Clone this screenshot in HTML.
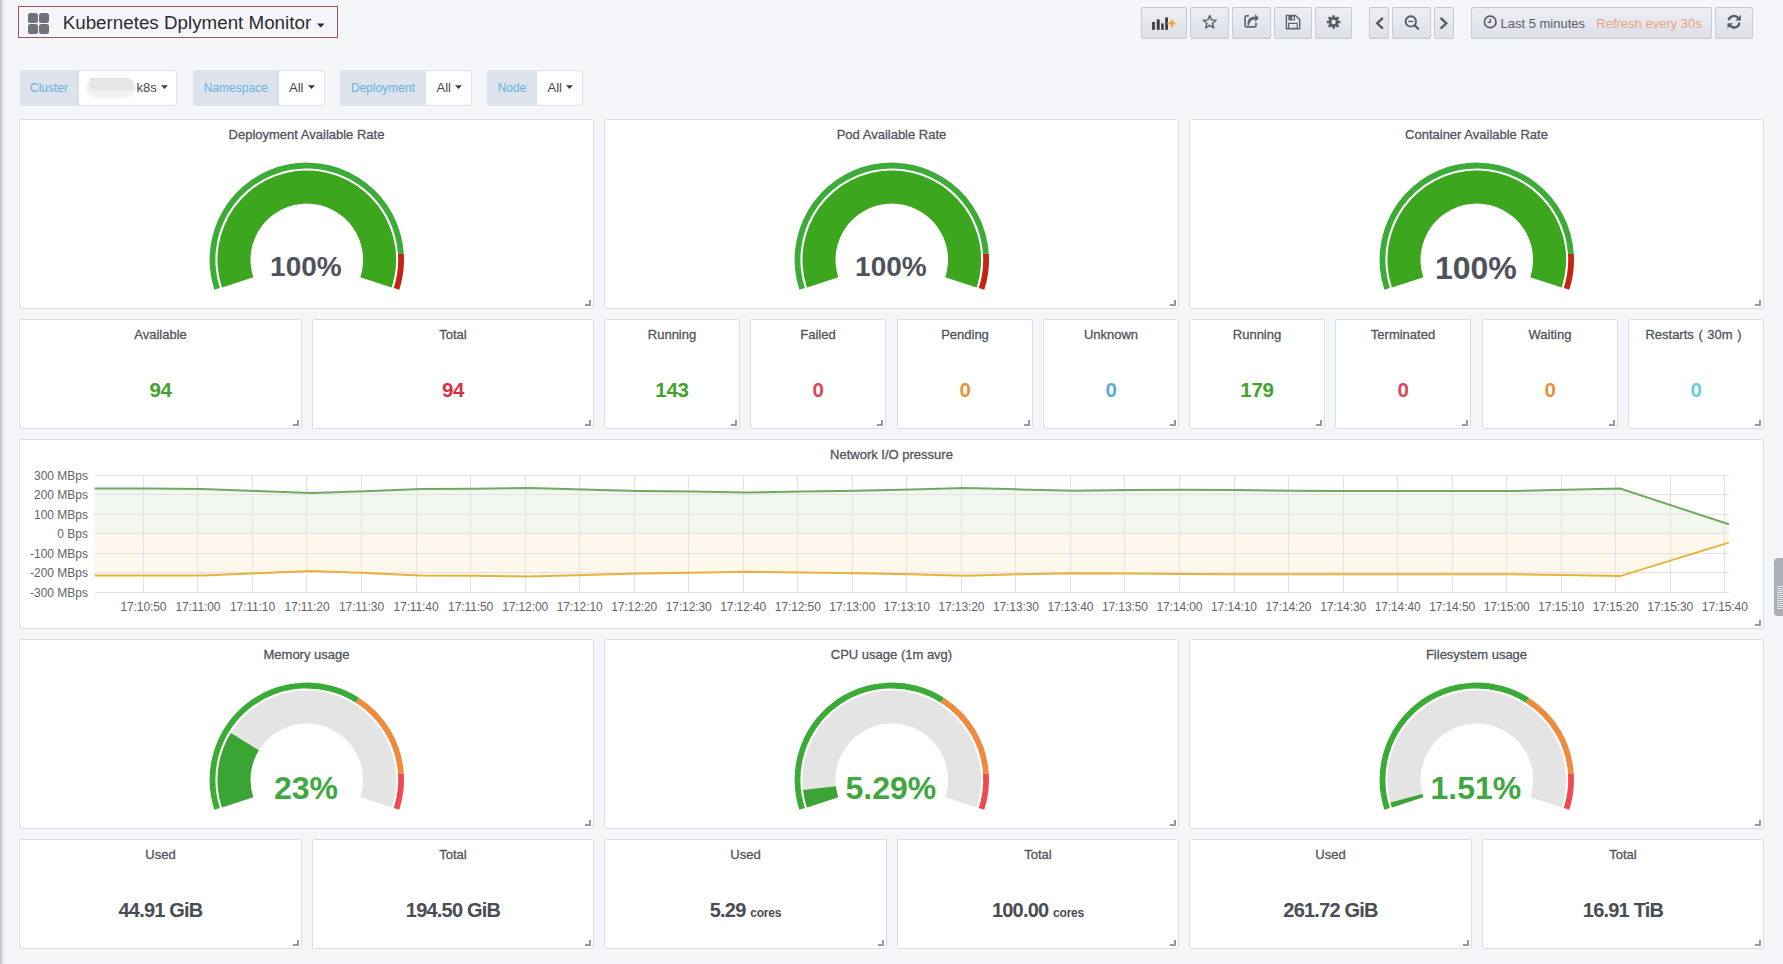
<!DOCTYPE html><html><head><meta charset="utf-8"><style>
html,body{margin:0;padding:0;}
body{width:1783px;height:964px;overflow:hidden;background:#f5f6f9;position:relative;font-family:"Liberation Sans", sans-serif;}
.t{position:absolute;line-height:1;white-space:nowrap;}
.p{position:absolute;box-sizing:border-box;background:#fff;border:1px solid #dcdee3;border-radius:2px;}
.rh{position:absolute;width:6px;height:6px;box-sizing:border-box;border-right:2px solid #97999d;border-bottom:2px solid #97999d;}
.lshadow{position:absolute;left:0;top:0;width:6px;height:964px;background:linear-gradient(90deg,#b9bcc2,#e9eaee 50%,#f5f6f9);}
.vl{position:absolute;top:70px;height:36px;box-sizing:border-box;background:#dde3ec;border-radius:3px 0 0 3px;}
.vv{position:absolute;top:70px;height:36px;box-sizing:border-box;background:#fff;border:1px solid #dfe3ea;border-left:none;border-radius:0 3px 3px 0;}
.b{position:absolute;top:7px;height:32px;box-sizing:border-box;background:linear-gradient(180deg,#eceef2,#dde1e8);border:1px solid #c6cad1;border-radius:2px;}
</style></head><body>
<div class="lshadow"></div>
<div style="position:absolute;left:18px;top:6px;width:320px;height:32px;box-sizing:border-box;border:1px solid #a4545e"></div>
<div style="position:absolute;left:28px;top:13px;width:10px;height:10px;border-radius:2.5px;background:#6f7279"></div>
<div style="position:absolute;left:39px;top:13px;width:10px;height:10px;border-radius:2.5px;background:#6f7279"></div>
<div style="position:absolute;left:28px;top:24px;width:10px;height:10px;border-radius:2.5px;background:#6f7279"></div>
<div style="position:absolute;left:39px;top:24px;width:10px;height:10px;border-radius:2.5px;background:#6f7279"></div>
<div class="t" style="left:62.70px;top:14.09px;font-size:18.8px;font-weight:normal;color:#2a2c32;">Kubernetes Dplyment Monitor</div>
<svg style="position:absolute;left:317px;top:23px" width="8" height="5"><path d="M0 0.5H7.5L3.75 4.5Z" fill="#2b2d33"/></svg>
<div class="vl" style="left:19.5px;width:59px"></div>
<div class="t" style="left:19.50px;top:81.64px;width:59.00px;font-size:12px;font-weight:normal;color:#69b1df;text-align:center;">Cluster</div>
<div class="vv" style="left:78.5px;width:98px"></div>
<div style="position:absolute;left:86px;top:77px;width:49px;height:21px;border-radius:10px;background:#f1f1f2;filter:blur(0.8px)"></div>
<div style="position:absolute;left:90px;top:78px;width:45px;height:12px;border-radius:1px 9px 0 0;background:#e6e6e7;filter:blur(0.5px)"></div>
<div class="t" style="left:136.50px;top:81.00px;font-size:13px;font-weight:normal;color:#46484e;">k8s</div>
<svg style="position:absolute;left:161.0px;top:85px" width="8" height="5"><path d="M0 0.3H7L3.5 4Z" fill="#3b3d43"/></svg>
<div class="vl" style="left:193px;width:85.5px"></div>
<div class="t" style="left:193.00px;top:81.64px;width:85.50px;font-size:12px;font-weight:normal;color:#69b1df;text-align:center;">Namespace</div>
<div class="vv" style="left:278.5px;width:46px"></div>
<div class="t" style="left:289.00px;top:81.00px;font-size:13px;font-weight:normal;color:#46484e;">All</div>
<svg style="position:absolute;left:307.5px;top:85px" width="8" height="5"><path d="M0 0.3H7L3.5 4Z" fill="#3b3d43"/></svg>
<div class="vl" style="left:340px;width:86px"></div>
<div class="t" style="left:340.00px;top:81.64px;width:86.00px;font-size:12px;font-weight:normal;color:#69b1df;text-align:center;">Deployment</div>
<div class="vv" style="left:426px;width:45.5px"></div>
<div class="t" style="left:436.50px;top:81.00px;font-size:13px;font-weight:normal;color:#46484e;">All</div>
<svg style="position:absolute;left:455px;top:85px" width="8" height="5"><path d="M0 0.3H7L3.5 4Z" fill="#3b3d43"/></svg>
<div class="vl" style="left:487px;width:50px"></div>
<div class="t" style="left:487.00px;top:81.64px;width:50.00px;font-size:12px;font-weight:normal;color:#69b1df;text-align:center;">Node</div>
<div class="vv" style="left:537px;width:45.5px"></div>
<div class="t" style="left:547.50px;top:81.00px;font-size:13px;font-weight:normal;color:#46484e;">All</div>
<svg style="position:absolute;left:566px;top:85px" width="8" height="5"><path d="M0 0.3H7L3.5 4Z" fill="#3b3d43"/></svg>
<div class="b" style="left:1141px;width:46px"></div>
<div class="b" style="left:1190px;width:39px"></div>
<div class="b" style="left:1232px;width:39px"></div>
<div class="b" style="left:1274px;width:38px"></div>
<div class="b" style="left:1315px;width:37px"></div>
<div class="b" style="left:1369px;width:20px"></div>
<div class="b" style="left:1392px;width:39px"></div>
<div class="b" style="left:1434px;width:20px"></div>
<div class="b" style="left:1471px;width:241px"></div>
<div class="b" style="left:1715px;width:38px"></div>
<svg style="position:absolute;left:1141px;top:7px" width="46" height="32">
<rect x="11.1" y="15" width="2.8" height="7.8" fill="#3a3d43"/><rect x="15.7" y="12.4" width="3" height="10.4" fill="#3a3d43"/>
<rect x="20.2" y="16.4" width="2.5" height="6.4" fill="#3a3d43"/><rect x="24.2" y="10.4" width="2.8" height="12.4" fill="#3a3d43"/>
<path d="M27 15.1h2.5v-2.6h2.6v2.6h2.5v2.6h-2.5v2.6h-2.6v-2.6h-2.5z" fill="#f2a12b" stroke="#f6dcb4" stroke-width="0.7"/></svg>
<svg style="position:absolute;left:1190px;top:7px" width="39" height="32"><polygon points="19.70,8.50 21.46,12.87 26.17,13.20 22.55,16.23 23.70,20.80 19.70,18.30 15.70,20.80 16.85,16.23 13.23,13.20 17.94,12.87" fill="none" stroke="#5a5d65" stroke-width="1.4" stroke-linejoin="round"/></svg>
<svg style="position:absolute;left:1232px;top:7px" width="39" height="32">
<path d="M16.8 8.9H14.6Q13.1 8.9 13.1 10.4V18.4Q13.1 19.9 14.6 19.9H22.5Q24 19.9 24 18.4V15.8" fill="none" stroke="#64676e" stroke-width="1.7"/>
<path d="M23.1 9.5V7.1L26.9 11L23.1 14.9V12.5C20 12.5 17.9 13.7 17.1 18.6L15.6 18.6C15.1 13.3 16.9 9.5 23.1 9.5Z" fill="#64676e"/></svg>
<svg style="position:absolute;left:1274px;top:7px" width="38" height="32">
<path d="M12.4 8.4H21.5L25.7 12.5V21.7H12.4Z" fill="none" stroke="#606369" stroke-width="1.4" stroke-linejoin="round"/>
<rect x="14.4" y="8.6" width="6.6" height="4.8" fill="#606369"/><rect x="18" y="9.6" width="1.9" height="2.7" fill="#dfe3e9"/>
<rect x="14.6" y="16.4" width="8.6" height="5" fill="none" stroke="#606369" stroke-width="1.2"/></svg>
<svg style="position:absolute;left:1315px;top:7px" width="37" height="32"><circle cx="18.6" cy="15" r="4.9" fill="#5a5d65"/><rect x="17.3" y="8.2" width="2.6" height="3" rx="0.4" fill="#5a5d65" transform="rotate(0 18.6 15)"/><rect x="17.3" y="8.2" width="2.6" height="3" rx="0.4" fill="#5a5d65" transform="rotate(45 18.6 15)"/><rect x="17.3" y="8.2" width="2.6" height="3" rx="0.4" fill="#5a5d65" transform="rotate(90 18.6 15)"/><rect x="17.3" y="8.2" width="2.6" height="3" rx="0.4" fill="#5a5d65" transform="rotate(135 18.6 15)"/><rect x="17.3" y="8.2" width="2.6" height="3" rx="0.4" fill="#5a5d65" transform="rotate(180 18.6 15)"/><rect x="17.3" y="8.2" width="2.6" height="3" rx="0.4" fill="#5a5d65" transform="rotate(225 18.6 15)"/><rect x="17.3" y="8.2" width="2.6" height="3" rx="0.4" fill="#5a5d65" transform="rotate(270 18.6 15)"/><rect x="17.3" y="8.2" width="2.6" height="3" rx="0.4" fill="#5a5d65" transform="rotate(315 18.6 15)"/><circle cx="18.6" cy="15" r="2.2" fill="#e6e9ee"/></svg>
<svg style="position:absolute;left:1369px;top:7px" width="20" height="32"><path d="M13.9 10.9L8.2 16.3L13.9 21.7" fill="none" stroke="#5a5d65" stroke-width="2.4"/></svg>
<svg style="position:absolute;left:1434px;top:7px" width="20" height="32"><path d="M6.6 10.9L12.3 16.3L6.6 21.7" fill="none" stroke="#5a5d65" stroke-width="2.4"/></svg>
<svg style="position:absolute;left:1392px;top:7px" width="39" height="32"><circle cx="18.8" cy="14.4" r="5.2" fill="none" stroke="#5a5d65" stroke-width="1.9"/><path d="M16.2 14.4h5.2" stroke="#5a5d65" stroke-width="1.3"/><path d="M22.6 18.2l3.6 3.6" stroke="#5a5d65" stroke-width="2.2" stroke-linecap="round"/></svg>
<svg style="position:absolute;left:1471px;top:7px" width="30" height="32"><circle cx="19.2" cy="14.9" r="5.8" fill="none" stroke="#5a5d65" stroke-width="1.7"/><path d="M19.3 11.8v3.6h-2.6" fill="none" stroke="#5a5d65" stroke-width="1.3"/></svg>
<div class="t" style="left:1500.50px;top:16.70px;font-size:13px;font-weight:normal;color:#5c5f67;">Last 5 minutes</div>
<div class="t" style="left:1596.30px;top:16.70px;font-size:13px;font-weight:normal;color:#eea27e;">Refresh every 30s</div>
<svg style="position:absolute;left:1715px;top:7px" width="38" height="32">
<path d="M13.6 13.3A5.3 5.3 0 0 1 23.2 11.2" fill="none" stroke="#5a5d65" stroke-width="2.3"/>
<path d="M25.9 7.8V13.4H20.3Z" fill="#5a5d65"/>
<path d="M24.4 15.6A5.3 5.3 0 0 1 14.6 17.9" fill="none" stroke="#5a5d65" stroke-width="2.3"/>
<path d="M12.5 21.6V16.2H17.9Z" fill="#5a5d65"/></svg>
<div class="p" style="left:19px;top:119px;width:575px;height:190px"></div>
<div class="rh" style="left:585px;top:300px"></div>
<div class="p" style="left:604px;top:119px;width:575px;height:190px"></div>
<div class="rh" style="left:1170px;top:300px"></div>
<div class="p" style="left:1189px;top:119px;width:575px;height:190px"></div>
<div class="rh" style="left:1755px;top:300px"></div>
<div class="p" style="left:19px;top:319px;width:283px;height:110px"></div>
<div class="rh" style="left:293px;top:420px"></div>
<div class="t" style="left:19.00px;top:327.70px;width:283.00px;font-size:13px;font-weight:normal;color:#52545c;text-align:center;-webkit-text-stroke:0.3px #52545c">Available</div>
<div class="t" style="left:19.00px;top:380.05px;width:283.00px;font-size:20.5px;font-weight:bold;color:#3fa32e;text-align:center;letter-spacing:-0.3px">94</div>
<div class="p" style="left:312px;top:319px;width:282px;height:110px"></div>
<div class="rh" style="left:585px;top:420px"></div>
<div class="t" style="left:312.00px;top:327.70px;width:282.00px;font-size:13px;font-weight:normal;color:#52545c;text-align:center;-webkit-text-stroke:0.3px #52545c">Total</div>
<div class="t" style="left:312.00px;top:380.05px;width:282.00px;font-size:20.5px;font-weight:bold;color:#d9323f;text-align:center;letter-spacing:-0.3px">94</div>
<div class="p" style="left:604px;top:319px;width:136px;height:110px"></div>
<div class="rh" style="left:731px;top:420px"></div>
<div class="t" style="left:604.00px;top:327.70px;width:136.00px;font-size:13px;font-weight:normal;color:#52545c;text-align:center;-webkit-text-stroke:0.3px #52545c">Running</div>
<div class="t" style="left:604.00px;top:380.05px;width:136.00px;font-size:20.5px;font-weight:bold;color:#3fa32e;text-align:center;letter-spacing:-0.3px">143</div>
<div class="p" style="left:750px;top:319px;width:136px;height:110px"></div>
<div class="rh" style="left:877px;top:420px"></div>
<div class="t" style="left:750.00px;top:327.70px;width:136.00px;font-size:13px;font-weight:normal;color:#52545c;text-align:center;-webkit-text-stroke:0.3px #52545c">Failed</div>
<div class="t" style="left:750.00px;top:380.05px;width:136.00px;font-size:20.5px;font-weight:bold;color:#d9485a;text-align:center;letter-spacing:-0.3px">0</div>
<div class="p" style="left:897px;top:319px;width:136px;height:110px"></div>
<div class="rh" style="left:1024px;top:420px"></div>
<div class="t" style="left:897.00px;top:327.70px;width:136.00px;font-size:13px;font-weight:normal;color:#52545c;text-align:center;-webkit-text-stroke:0.3px #52545c">Pending</div>
<div class="t" style="left:897.00px;top:380.05px;width:136.00px;font-size:20.5px;font-weight:bold;color:#e8913f;text-align:center;letter-spacing:-0.3px">0</div>
<div class="p" style="left:1043px;top:319px;width:136px;height:110px"></div>
<div class="rh" style="left:1170px;top:420px"></div>
<div class="t" style="left:1043.00px;top:327.70px;width:136.00px;font-size:13px;font-weight:normal;color:#52545c;text-align:center;-webkit-text-stroke:0.3px #52545c">Unknown</div>
<div class="t" style="left:1043.00px;top:380.05px;width:136.00px;font-size:20.5px;font-weight:bold;color:#5aaed0;text-align:center;letter-spacing:-0.3px">0</div>
<div class="p" style="left:1189px;top:319px;width:136px;height:110px"></div>
<div class="rh" style="left:1316px;top:420px"></div>
<div class="t" style="left:1189.00px;top:327.70px;width:136.00px;font-size:13px;font-weight:normal;color:#52545c;text-align:center;-webkit-text-stroke:0.3px #52545c">Running</div>
<div class="t" style="left:1189.00px;top:380.05px;width:136.00px;font-size:20.5px;font-weight:bold;color:#3fa32e;text-align:center;letter-spacing:-0.3px">179</div>
<div class="p" style="left:1335px;top:319px;width:136px;height:110px"></div>
<div class="rh" style="left:1462px;top:420px"></div>
<div class="t" style="left:1335.00px;top:327.70px;width:136.00px;font-size:13px;font-weight:normal;color:#52545c;text-align:center;-webkit-text-stroke:0.3px #52545c">Terminated</div>
<div class="t" style="left:1335.00px;top:380.05px;width:136.00px;font-size:20.5px;font-weight:bold;color:#d9485a;text-align:center;letter-spacing:-0.3px">0</div>
<div class="p" style="left:1482px;top:319px;width:136px;height:110px"></div>
<div class="rh" style="left:1609px;top:420px"></div>
<div class="t" style="left:1482.00px;top:327.70px;width:136.00px;font-size:13px;font-weight:normal;color:#52545c;text-align:center;-webkit-text-stroke:0.3px #52545c">Waiting</div>
<div class="t" style="left:1482.00px;top:380.05px;width:136.00px;font-size:20.5px;font-weight:bold;color:#e8913f;text-align:center;letter-spacing:-0.3px">0</div>
<div class="p" style="left:1628px;top:319px;width:136px;height:110px"></div>
<div class="rh" style="left:1755px;top:420px"></div>
<div class="t" style="left:1625.50px;top:327.70px;width:136.00px;font-size:13px;font-weight:normal;color:#52545c;text-align:center;-webkit-text-stroke:0.3px #52545c;word-spacing:1px">Restarts ( 30m )</div>
<div class="t" style="left:1628.00px;top:380.05px;width:136.00px;font-size:20.5px;font-weight:bold;color:#6ccbe0;text-align:center;letter-spacing:-0.3px">0</div>
<div class="p" style="left:19px;top:439px;width:1745px;height:190px"></div>
<div class="rh" style="left:1755px;top:620px"></div>
<div class="p" style="left:19px;top:639px;width:575px;height:190px"></div>
<div class="rh" style="left:585px;top:820px"></div>
<div class="p" style="left:604px;top:639px;width:575px;height:190px"></div>
<div class="rh" style="left:1170px;top:820px"></div>
<div class="p" style="left:1189px;top:639px;width:575px;height:190px"></div>
<div class="rh" style="left:1755px;top:820px"></div>
<div class="p" style="left:19px;top:839px;width:283px;height:110px"></div>
<div class="rh" style="left:293px;top:940px"></div>
<div class="t" style="left:19.00px;top:847.70px;width:283.00px;font-size:13px;font-weight:normal;color:#52545c;text-align:center;-webkit-text-stroke:0.3px #52545c">Used</div>
<div class="t" style="left:19.00px;top:900.37px;width:283.00px;font-size:20px;font-weight:bold;color:#4a4c53;text-align:center;letter-spacing:-0.8px">44.91 GiB</div>
<div class="p" style="left:312px;top:839px;width:282px;height:110px"></div>
<div class="rh" style="left:585px;top:940px"></div>
<div class="t" style="left:312.00px;top:847.70px;width:282.00px;font-size:13px;font-weight:normal;color:#52545c;text-align:center;-webkit-text-stroke:0.3px #52545c">Total</div>
<div class="t" style="left:312.00px;top:900.37px;width:282.00px;font-size:20px;font-weight:bold;color:#4a4c53;text-align:center;letter-spacing:-0.8px">194.50 GiB</div>
<div class="p" style="left:604px;top:839px;width:283px;height:110px"></div>
<div class="rh" style="left:878px;top:940px"></div>
<div class="t" style="left:604.00px;top:847.70px;width:283.00px;font-size:13px;font-weight:normal;color:#52545c;text-align:center;-webkit-text-stroke:0.3px #52545c">Used</div>
<div class="t" style="left:604.00px;top:900.37px;width:283.00px;font-size:20px;font-weight:bold;color:#4a4c53;text-align:center;letter-spacing:-0.8px">5.29 <span style="font-size:12px;letter-spacing:-0.2px">cores</span></div>
<div class="p" style="left:897px;top:839px;width:282px;height:110px"></div>
<div class="rh" style="left:1170px;top:940px"></div>
<div class="t" style="left:897.00px;top:847.70px;width:282.00px;font-size:13px;font-weight:normal;color:#52545c;text-align:center;-webkit-text-stroke:0.3px #52545c">Total</div>
<div class="t" style="left:897.00px;top:900.37px;width:282.00px;font-size:20px;font-weight:bold;color:#4a4c53;text-align:center;letter-spacing:-0.8px">100.00 <span style="font-size:12px;letter-spacing:-0.2px">cores</span></div>
<div class="p" style="left:1189px;top:839px;width:283px;height:110px"></div>
<div class="rh" style="left:1463px;top:940px"></div>
<div class="t" style="left:1189.00px;top:847.70px;width:283.00px;font-size:13px;font-weight:normal;color:#52545c;text-align:center;-webkit-text-stroke:0.3px #52545c">Used</div>
<div class="t" style="left:1189.00px;top:900.37px;width:283.00px;font-size:20px;font-weight:bold;color:#4a4c53;text-align:center;letter-spacing:-0.8px">261.72 GiB</div>
<div class="p" style="left:1482px;top:839px;width:282px;height:110px"></div>
<div class="rh" style="left:1755px;top:940px"></div>
<div class="t" style="left:1482.00px;top:847.70px;width:282.00px;font-size:13px;font-weight:normal;color:#52545c;text-align:center;-webkit-text-stroke:0.3px #52545c">Total</div>
<div class="t" style="left:1482.00px;top:900.37px;width:282.00px;font-size:20px;font-weight:bold;color:#4a4c53;text-align:center;letter-spacing:-0.8px">16.91 TiB</div>
<div class="t" style="left:19.00px;top:127.70px;width:575.00px;font-size:13px;font-weight:normal;color:#52545c;text-align:center;-webkit-text-stroke:0.3px #52545c">Deployment Available Rate</div>
<div class="t" style="left:604.00px;top:127.70px;width:575.00px;font-size:13px;font-weight:normal;color:#52545c;text-align:center;-webkit-text-stroke:0.3px #52545c">Pod Available Rate</div>
<div class="t" style="left:1189.00px;top:127.70px;width:575.00px;font-size:13px;font-weight:normal;color:#52545c;text-align:center;-webkit-text-stroke:0.3px #52545c">Container Available Rate</div>
<div class="t" style="left:19.00px;top:647.70px;width:575.00px;font-size:13px;font-weight:normal;color:#52545c;text-align:center;-webkit-text-stroke:0.3px #52545c">Memory usage</div>
<div class="t" style="left:604.00px;top:647.70px;width:575.00px;font-size:13px;font-weight:normal;color:#52545c;text-align:center;-webkit-text-stroke:0.3px #52545c">CPU usage (1m avg)</div>
<div class="t" style="left:1189.00px;top:647.70px;width:575.00px;font-size:13px;font-weight:normal;color:#52545c;text-align:center;-webkit-text-stroke:0.3px #52545c">Filesystem usage</div>
<div class="t" style="left:19.00px;top:447.70px;width:1745.00px;font-size:13px;font-weight:normal;color:#52545c;text-align:center;-webkit-text-stroke:0.3px #52545c">Network I/O pressure</div>
<svg style="position:absolute;left:0;top:0" width="1783" height="964"><path d="M221.87 287.40A89.3 89.3 0 1 1 391.73 287.40L360.34 277.20A56.3 56.3 0 1 0 253.26 277.20Z" fill="#e5e5e5"/><path d="M221.87 287.40A89.3 89.3 0 1 1 391.73 287.40L360.34 277.20A56.3 56.3 0 1 0 253.26 277.20Z" fill="#3ca61f"/><path d="M214.36 289.84A97.2 97.2 0 1 1 403.81 253.70L398.02 254.06A91.4 91.4 0 1 0 219.87 288.04Z" fill="#3dab37"/><path d="M403.81 253.70A97.2 97.2 0 0 1 399.24 289.84L393.73 288.04A91.4 91.4 0 0 0 398.02 254.06Z" fill="#c42413"/><text x="305.90" y="276.10" text-anchor="middle" font-family="Liberation Sans" font-weight="bold" font-size="28" fill="#4f525a">100%</text><path d="M806.87 287.40A89.3 89.3 0 1 1 976.73 287.40L945.34 277.20A56.3 56.3 0 1 0 838.26 277.20Z" fill="#e5e5e5"/><path d="M806.87 287.40A89.3 89.3 0 1 1 976.73 287.40L945.34 277.20A56.3 56.3 0 1 0 838.26 277.20Z" fill="#3ca61f"/><path d="M799.36 289.84A97.2 97.2 0 1 1 988.81 253.70L983.02 254.06A91.4 91.4 0 1 0 804.87 288.04Z" fill="#3dab37"/><path d="M988.81 253.70A97.2 97.2 0 0 1 984.24 289.84L978.73 288.04A91.4 91.4 0 0 0 983.02 254.06Z" fill="#c42413"/><text x="890.90" y="276.10" text-anchor="middle" font-family="Liberation Sans" font-weight="bold" font-size="28" fill="#4f525a">100%</text><path d="M1391.87 287.40A89.3 89.3 0 1 1 1561.73 287.40L1530.34 277.20A56.3 56.3 0 1 0 1423.26 277.20Z" fill="#e5e5e5"/><path d="M1391.87 287.40A89.3 89.3 0 1 1 1561.73 287.40L1530.34 277.20A56.3 56.3 0 1 0 1423.26 277.20Z" fill="#3ca61f"/><path d="M1384.36 289.84A97.2 97.2 0 1 1 1573.81 253.70L1568.02 254.06A91.4 91.4 0 1 0 1389.87 288.04Z" fill="#3dab37"/><path d="M1573.81 253.70A97.2 97.2 0 0 1 1569.24 289.84L1563.73 288.04A91.4 91.4 0 0 0 1568.02 254.06Z" fill="#c42413"/><text x="1475.90" y="278.60" text-anchor="middle" font-family="Liberation Sans" font-weight="bold" font-size="32" fill="#4f525a">100%</text><path d="M221.87 807.40A89.3 89.3 0 1 1 391.73 807.40L360.34 797.20A56.3 56.3 0 1 0 253.26 797.20Z" fill="#e4e4e4"/><path d="M221.87 807.40A89.3 89.3 0 0 1 230.81 732.90L258.89 750.23A56.3 56.3 0 0 0 253.26 797.20Z" fill="#3aa534"/><path d="M214.36 809.84A97.2 97.2 0 0 1 358.88 697.73L355.77 702.63A91.4 91.4 0 0 0 219.87 808.04Z" fill="#3aab35"/><path d="M358.88 697.73A97.2 97.2 0 0 1 403.81 773.70L398.02 774.06A91.4 91.4 0 0 0 355.77 702.63Z" fill="#ef8b3f"/><path d="M403.81 773.70A97.2 97.2 0 0 1 399.24 809.84L393.73 808.04A91.4 91.4 0 0 0 398.02 774.06Z" fill="#ee4a50"/><text x="305.90" y="798.80" text-anchor="middle" font-family="Liberation Sans" font-weight="bold" font-size="32" fill="#3ea83f">23%</text><path d="M806.87 807.40A89.3 89.3 0 1 1 976.73 807.40L945.34 797.20A56.3 56.3 0 1 0 838.26 797.20Z" fill="#e4e4e4"/><path d="M806.87 807.40A89.3 89.3 0 0 1 803.09 790.02L835.87 786.25A56.3 56.3 0 0 0 838.26 797.20Z" fill="#3aa534"/><path d="M799.36 809.84A97.2 97.2 0 0 1 943.88 697.73L940.77 702.63A91.4 91.4 0 0 0 804.87 808.04Z" fill="#3aab35"/><path d="M943.88 697.73A97.2 97.2 0 0 1 988.81 773.70L983.02 774.06A91.4 91.4 0 0 0 940.77 702.63Z" fill="#ef8b3f"/><path d="M988.81 773.70A97.2 97.2 0 0 1 984.24 809.84L978.73 808.04A91.4 91.4 0 0 0 983.02 774.06Z" fill="#ee4a50"/><text x="890.90" y="798.80" text-anchor="middle" font-family="Liberation Sans" font-weight="bold" font-size="32" fill="#3ea83f">5.29%</text><path d="M1391.87 807.40A89.3 89.3 0 1 1 1561.73 807.40L1530.34 797.20A56.3 56.3 0 1 0 1423.26 797.20Z" fill="#e4e4e4"/><path d="M1391.87 807.40A89.3 89.3 0 0 1 1390.44 802.52L1422.35 794.12A56.3 56.3 0 0 0 1423.26 797.20Z" fill="#3aa534"/><path d="M1384.36 809.84A97.2 97.2 0 0 1 1528.88 697.73L1525.77 702.63A91.4 91.4 0 0 0 1389.87 808.04Z" fill="#3aab35"/><path d="M1528.88 697.73A97.2 97.2 0 0 1 1573.81 773.70L1568.02 774.06A91.4 91.4 0 0 0 1525.77 702.63Z" fill="#ef8b3f"/><path d="M1573.81 773.70A97.2 97.2 0 0 1 1569.24 809.84L1563.73 808.04A91.4 91.4 0 0 0 1568.02 774.06Z" fill="#ee4a50"/><text x="1475.90" y="798.80" text-anchor="middle" font-family="Liberation Sans" font-weight="bold" font-size="32" fill="#3ea83f">1.51%</text></svg>
<svg style="position:absolute;left:0;top:0" width="1783" height="964"><polygon points="94.6,488.5 147.4,488.5 202.6,489.0 256.6,491.0 311.5,493.1 365.4,491.3 420.3,489.1 474.3,488.8 529.5,487.9 583.5,489.4 638.4,491.0 692.6,491.6 747.2,492.5 801.5,491.6 856.4,490.7 910.4,489.4 965.6,487.9 1019.6,489.4 1074.5,490.7 1128.4,490.0 1183.6,489.8 1237.3,490.1 1292.9,490.8 1346.6,491.1 1401.6,491.1 1455.3,491.1 1510.3,491.1 1564.7,489.8 1620.1,488.5 1728.8,524.3 1728.8,533.5 94.6,533.5" fill="#7eb26d" fill-opacity="0.1"/><polygon points="94.6,575.5 147.4,575.5 202.6,575.5 256.6,573.3 311.5,570.9 365.4,573.0 420.3,575.5 474.3,575.8 529.5,576.4 583.5,574.9 638.4,573.6 692.6,572.7 747.2,571.8 801.5,572.4 856.4,573.3 910.4,574.3 965.6,575.8 1019.6,574.3 1074.5,573.3 1128.4,573.6 1183.6,573.9 1237.3,574.2 1292.9,574.2 1346.6,574.2 1401.6,574.2 1455.3,574.2 1510.3,574.2 1564.7,574.9 1620.1,576.1 1728.8,542.6 1728.8,533.5 94.6,533.5" fill="#eab839" fill-opacity="0.1"/><path d="M94.6 475.5H1728.8" stroke="#e2e2e2" stroke-width="1"/><path d="M94.6 494.5H1728.8" stroke="#e2e2e2" stroke-width="1"/><path d="M94.6 514.5H1728.8" stroke="#e2e2e2" stroke-width="1"/><path d="M94.6 533.5H1728.8" stroke="#e2e2e2" stroke-width="1"/><path d="M94.6 553.5H1728.8" stroke="#e2e2e2" stroke-width="1"/><path d="M94.6 572.5H1728.8" stroke="#e2e2e2" stroke-width="1"/><path d="M94.6 592.5H1728.8" stroke="#e2e2e2" stroke-width="1"/><path d="M143.5 475.5V592.5" stroke="#e2e2e2" stroke-width="1"/><path d="M197.5 475.5V592.5" stroke="#e2e2e2" stroke-width="1"/><path d="M252.5 475.5V592.5" stroke="#e2e2e2" stroke-width="1"/><path d="M306.5 475.5V592.5" stroke="#e2e2e2" stroke-width="1"/><path d="M361.5 475.5V592.5" stroke="#e2e2e2" stroke-width="1"/><path d="M416.5 475.5V592.5" stroke="#e2e2e2" stroke-width="1"/><path d="M470.5 475.5V592.5" stroke="#e2e2e2" stroke-width="1"/><path d="M525.5 475.5V592.5" stroke="#e2e2e2" stroke-width="1"/><path d="M579.5 475.5V592.5" stroke="#e2e2e2" stroke-width="1"/><path d="M634.5 475.5V592.5" stroke="#e2e2e2" stroke-width="1"/><path d="M688.5 475.5V592.5" stroke="#e2e2e2" stroke-width="1"/><path d="M743.5 475.5V592.5" stroke="#e2e2e2" stroke-width="1"/><path d="M797.5 475.5V592.5" stroke="#e2e2e2" stroke-width="1"/><path d="M852.5 475.5V592.5" stroke="#e2e2e2" stroke-width="1"/><path d="M906.5 475.5V592.5" stroke="#e2e2e2" stroke-width="1"/><path d="M961.5 475.5V592.5" stroke="#e2e2e2" stroke-width="1"/><path d="M1015.5 475.5V592.5" stroke="#e2e2e2" stroke-width="1"/><path d="M1070.5 475.5V592.5" stroke="#e2e2e2" stroke-width="1"/><path d="M1124.5 475.5V592.5" stroke="#e2e2e2" stroke-width="1"/><path d="M1179.5 475.5V592.5" stroke="#e2e2e2" stroke-width="1"/><path d="M1234.5 475.5V592.5" stroke="#e2e2e2" stroke-width="1"/><path d="M1288.5 475.5V592.5" stroke="#e2e2e2" stroke-width="1"/><path d="M1343.5 475.5V592.5" stroke="#e2e2e2" stroke-width="1"/><path d="M1397.5 475.5V592.5" stroke="#e2e2e2" stroke-width="1"/><path d="M1452.5 475.5V592.5" stroke="#e2e2e2" stroke-width="1"/><path d="M1506.5 475.5V592.5" stroke="#e2e2e2" stroke-width="1"/><path d="M1561.5 475.5V592.5" stroke="#e2e2e2" stroke-width="1"/><path d="M1615.5 475.5V592.5" stroke="#e2e2e2" stroke-width="1"/><path d="M1670.5 475.5V592.5" stroke="#e2e2e2" stroke-width="1"/><path d="M1724.5 475.5V592.5" stroke="#e2e2e2" stroke-width="1"/><polyline points="94.6,488.5 147.4,488.5 202.6,489.0 256.6,491.0 311.5,493.1 365.4,491.3 420.3,489.1 474.3,488.8 529.5,487.9 583.5,489.4 638.4,491.0 692.6,491.6 747.2,492.5 801.5,491.6 856.4,490.7 910.4,489.4 965.6,487.9 1019.6,489.4 1074.5,490.7 1128.4,490.0 1183.6,489.8 1237.3,490.1 1292.9,490.8 1346.6,491.1 1401.6,491.1 1455.3,491.1 1510.3,491.1 1564.7,489.8 1620.1,488.5 1728.8,524.3" fill="none" stroke="#72a862" stroke-width="2"/><polyline points="94.6,575.5 147.4,575.5 202.6,575.5 256.6,573.3 311.5,570.9 365.4,573.0 420.3,575.5 474.3,575.8 529.5,576.4 583.5,574.9 638.4,573.6 692.6,572.7 747.2,571.8 801.5,572.4 856.4,573.3 910.4,574.3 965.6,575.8 1019.6,574.3 1074.5,573.3 1128.4,573.6 1183.6,573.9 1237.3,574.2 1292.9,574.2 1346.6,574.2 1401.6,574.2 1455.3,574.2 1510.3,574.2 1564.7,574.9 1620.1,576.1 1728.8,542.6" fill="none" stroke="#e6b23a" stroke-width="2"/><text x="88" y="479.7" text-anchor="end" font-family="Liberation Sans" font-size="12" fill="#616469">300 MBps</text><text x="88" y="498.7" text-anchor="end" font-family="Liberation Sans" font-size="12" fill="#616469">200 MBps</text><text x="88" y="518.7" text-anchor="end" font-family="Liberation Sans" font-size="12" fill="#616469">100 MBps</text><text x="88" y="537.7" text-anchor="end" font-family="Liberation Sans" font-size="12" fill="#616469">0 Bps</text><text x="88" y="557.7" text-anchor="end" font-family="Liberation Sans" font-size="12" fill="#616469">-100 MBps</text><text x="88" y="576.7" text-anchor="end" font-family="Liberation Sans" font-size="12" fill="#616469">-200 MBps</text><text x="88" y="596.7" text-anchor="end" font-family="Liberation Sans" font-size="12" fill="#616469">-300 MBps</text><text x="143.4" y="611" text-anchor="middle" font-family="Liberation Sans" font-size="12" letter-spacing="-0.1" fill="#616469">17:10:50</text><text x="197.9" y="611" text-anchor="middle" font-family="Liberation Sans" font-size="12" letter-spacing="-0.1" fill="#616469">17:11:00</text><text x="252.5" y="611" text-anchor="middle" font-family="Liberation Sans" font-size="12" letter-spacing="-0.1" fill="#616469">17:11:10</text><text x="307.0" y="611" text-anchor="middle" font-family="Liberation Sans" font-size="12" letter-spacing="-0.1" fill="#616469">17:11:20</text><text x="361.5" y="611" text-anchor="middle" font-family="Liberation Sans" font-size="12" letter-spacing="-0.1" fill="#616469">17:11:30</text><text x="416.0" y="611" text-anchor="middle" font-family="Liberation Sans" font-size="12" letter-spacing="-0.1" fill="#616469">17:11:40</text><text x="470.6" y="611" text-anchor="middle" font-family="Liberation Sans" font-size="12" letter-spacing="-0.1" fill="#616469">17:11:50</text><text x="525.1" y="611" text-anchor="middle" font-family="Liberation Sans" font-size="12" letter-spacing="-0.1" fill="#616469">17:12:00</text><text x="579.6" y="611" text-anchor="middle" font-family="Liberation Sans" font-size="12" letter-spacing="-0.1" fill="#616469">17:12:10</text><text x="634.2" y="611" text-anchor="middle" font-family="Liberation Sans" font-size="12" letter-spacing="-0.1" fill="#616469">17:12:20</text><text x="688.7" y="611" text-anchor="middle" font-family="Liberation Sans" font-size="12" letter-spacing="-0.1" fill="#616469">17:12:30</text><text x="743.2" y="611" text-anchor="middle" font-family="Liberation Sans" font-size="12" letter-spacing="-0.1" fill="#616469">17:12:40</text><text x="797.8" y="611" text-anchor="middle" font-family="Liberation Sans" font-size="12" letter-spacing="-0.1" fill="#616469">17:12:50</text><text x="852.3" y="611" text-anchor="middle" font-family="Liberation Sans" font-size="12" letter-spacing="-0.1" fill="#616469">17:13:00</text><text x="906.8" y="611" text-anchor="middle" font-family="Liberation Sans" font-size="12" letter-spacing="-0.1" fill="#616469">17:13:10</text><text x="961.4" y="611" text-anchor="middle" font-family="Liberation Sans" font-size="12" letter-spacing="-0.1" fill="#616469">17:13:20</text><text x="1015.9" y="611" text-anchor="middle" font-family="Liberation Sans" font-size="12" letter-spacing="-0.1" fill="#616469">17:13:30</text><text x="1070.4" y="611" text-anchor="middle" font-family="Liberation Sans" font-size="12" letter-spacing="-0.1" fill="#616469">17:13:40</text><text x="1124.9" y="611" text-anchor="middle" font-family="Liberation Sans" font-size="12" letter-spacing="-0.1" fill="#616469">17:13:50</text><text x="1179.5" y="611" text-anchor="middle" font-family="Liberation Sans" font-size="12" letter-spacing="-0.1" fill="#616469">17:14:00</text><text x="1234.0" y="611" text-anchor="middle" font-family="Liberation Sans" font-size="12" letter-spacing="-0.1" fill="#616469">17:14:10</text><text x="1288.5" y="611" text-anchor="middle" font-family="Liberation Sans" font-size="12" letter-spacing="-0.1" fill="#616469">17:14:20</text><text x="1343.1" y="611" text-anchor="middle" font-family="Liberation Sans" font-size="12" letter-spacing="-0.1" fill="#616469">17:14:30</text><text x="1397.6" y="611" text-anchor="middle" font-family="Liberation Sans" font-size="12" letter-spacing="-0.1" fill="#616469">17:14:40</text><text x="1452.1" y="611" text-anchor="middle" font-family="Liberation Sans" font-size="12" letter-spacing="-0.1" fill="#616469">17:14:50</text><text x="1506.7" y="611" text-anchor="middle" font-family="Liberation Sans" font-size="12" letter-spacing="-0.1" fill="#616469">17:15:00</text><text x="1561.2" y="611" text-anchor="middle" font-family="Liberation Sans" font-size="12" letter-spacing="-0.1" fill="#616469">17:15:10</text><text x="1615.7" y="611" text-anchor="middle" font-family="Liberation Sans" font-size="12" letter-spacing="-0.1" fill="#616469">17:15:20</text><text x="1670.2" y="611" text-anchor="middle" font-family="Liberation Sans" font-size="12" letter-spacing="-0.1" fill="#616469">17:15:30</text><text x="1724.8" y="611" text-anchor="middle" font-family="Liberation Sans" font-size="12" letter-spacing="-0.1" fill="#616469">17:15:40</text></svg>
<div style="position:absolute;left:1774px;top:558px;width:12px;height:58px;border-radius:4px;background:#acafb6"></div>
<div style="position:absolute;left:1777px;top:586px;width:6px;height:1px;background:#dfe3e0"></div>
<div style="position:absolute;left:1777px;top:588px;width:6px;height:1px;background:#dfe3e0"></div>
<div style="position:absolute;left:1777px;top:590px;width:6px;height:1px;background:#dfe3e0"></div>
<div style="position:absolute;left:1777px;top:592px;width:6px;height:1px;background:#dfe3e0"></div>
<div style="position:absolute;left:1777px;top:594px;width:6px;height:1px;background:#dfe3e0"></div>
<div style="position:absolute;left:1777px;top:596px;width:6px;height:1px;background:#dfe3e0"></div>
<div style="position:absolute;left:1777px;top:598px;width:6px;height:1px;background:#dfe3e0"></div>
<div style="position:absolute;left:1777px;top:600px;width:6px;height:1px;background:#dfe3e0"></div>
<div style="position:absolute;left:1777px;top:602px;width:6px;height:1px;background:#dfe3e0"></div>
<div style="position:absolute;left:1777px;top:604px;width:6px;height:1px;background:#dfe3e0"></div>
<div style="position:absolute;left:1777px;top:606px;width:6px;height:1px;background:#dfe3e0"></div>
<div style="position:absolute;left:1777px;top:608px;width:6px;height:1px;background:#dfe3e0"></div>
</body></html>
